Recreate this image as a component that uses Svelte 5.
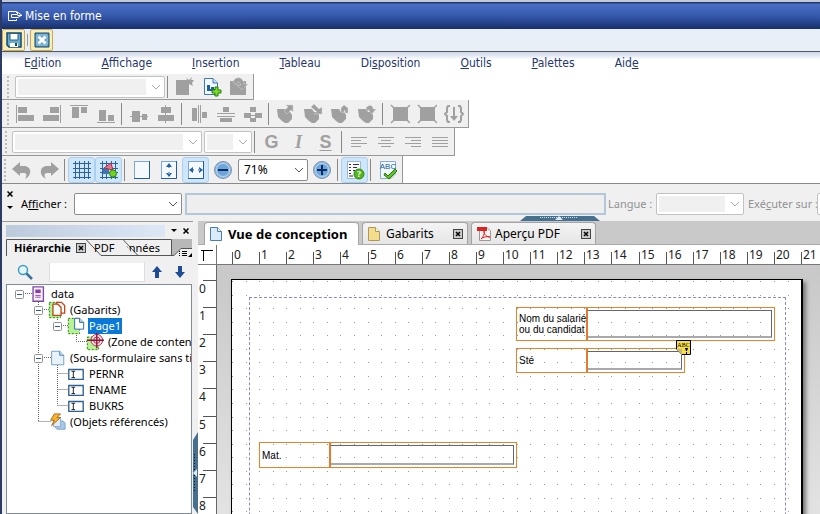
<script>
  const G = '#a0a0a0';
  const r = (x, y, w, h, f = G) => `<rect x="${x}" y="${y}" width="${w}" height="${h}" fill="${f}"/>`;
  const p = (d, f = G, s = 'none', w = 1) => `<path d="${d}" fill="${f}" stroke="${s}" stroke-width="${w}"/>`;
  const stack = p('M1 5H9L11 8H14L16 11V15L12 19H9L6 17L2 13Z');
  const gridLines = p('M1 3.5H19M1 8.5H19M1 12.5H19M1 17.5H19M3.5 1V19M7.5 1V19M12.5 1V19M16.5 1V19', 'none', '#2b62a0');
  const sheet = (x, w) => `<rect x="${x}.5" y="1.5" width="${w}" height="17" fill="#f3f9ff" stroke="#7fa6cf"/>` + p(`M${x + w}.5 1V18.5H${x}`, 'none', '#225c9c');
  const disc = '<circle cx="10" cy="10" r="8.5" fill="#8dbbe3" stroke="#8394aa"/><circle cx="10" cy="10" r="6.5" fill="#6fa6da" stroke="#b7d8f2"/>';
  const greenDot = '<circle cx="14" cy="14" r="5" fill="#55b51c" stroke="#2f8a10"/>';

  const icons = {
    newTable: r(1, 3, 13, 15) + p('M10 5L12 3L11 1L14 3L17 0L16 3L19 3L17 6L18 9L14 7L11 9Z', G),
    addData: p('M2.5 1.5H11L15.5 6V17.5H2.5Z', '#f3f9ff', '#3b78b4') + p('M11 1.5V6H15.5', '#cfe2f4', '#3b78b4') + r(5, 8, 3, 6, '#225f9f') + r(9, 10, 3, 4, '#225f9f') + r(5, 12, 8, 2, '#225f9f') + p('M13 10H16V13H19V16H16V19H13V16H10V13H13Z', '#75dd22', '#267d0c'),
    refresh: r(1, 4, 16, 14) + p('M4 5C6 -1 14 -1 15 7H19L13 13L8 8H12C11 4 8 4 7 8Z', G, '#d8d8d8', 0.5),
    alignLeft: r(1, 1, 1, 18) + r(3, 3, 9, 6) + r(3, 11, 16, 6),
    alignRight: r(18, 1, 1, 18) + r(8, 3, 9, 6) + r(1, 11, 16, 6),
    alignTop: r(1, 1, 18, 1) + r(3, 3, 7, 11) + r(12, 3, 6, 6),
    alignBottom: r(1, 18, 18, 1) + r(3, 6, 7, 11) + r(12, 11, 6, 6),
    middle: r(3, 7, 8, 11) + r(13, 10, 5, 6) + r(1, 12, 18, 1),
    center: r(5, 3, 10, 6) + r(2, 11, 16, 6) + r(9, 1, 1, 18),
    spreadH: r(3, 4, 5, 13) + r(9, 1, 1, 18) + r(11, 1, 1, 18) + r(13, 8, 5, 6),
    spreadV: r(7, 3, 6, 5) + r(1, 9, 18, 1) + r(1, 12, 18, 1) + r(4, 14, 12, 4),
    spread: r(7, 3, 6, 5) + r(1, 9, 7, 5) + r(12, 9, 7, 5) + r(7, 14, 6, 4) + r(8, 11, 4, 1),
    toFront: stack + p('M10 1H17V8L15 6L11 10L8 7L12 3Z', G, '#d8d8d8', 0.5),
    toBack: stack + p('M8 3L11 0L16 5L19 3V10H11L14 8Z', G, '#d8d8d8', 0.5),
    forward: stack + p('M11 8V4L14 1L18 4V9H15V6L13 9Z', G, '#d8d8d8', 0.5),
    backward: stack + p('M9 4C12 0 16 1 16 5H19L15 10L11 6H13L10 7Z', G, '#d8d8d8', 0.5),
    group: r(3, 3, 15, 14) + p('M1 1L4 4M20 1L17 4M1 19L4 16M20 19L17 16', 'none', G, 1.5),
    merge: p('M6 2H4L3 4V8L1 10L3 12V16L4 18H6M14 2H16L17 4V8L19 10L17 12V16L16 18H14', 'none', G, 2) + p('M9 3H11V12H14L10 17L6 12H9Z'),
    textLeft: r(2, 5, 16, 1) + r(2, 8, 10, 1) + r(2, 11, 16, 1) + r(2, 14, 10, 1),
    textCenter: r(2, 5, 16, 1) + r(5, 8, 10, 1) + r(2, 11, 16, 1) + r(5, 14, 10, 1),
    textRight: r(2, 5, 16, 1) + r(8, 8, 10, 1) + r(2, 11, 16, 1) + r(8, 14, 10, 1),
    justify: r(2, 5, 16, 1) + r(2, 8, 16, 1) + r(2, 11, 16, 1) + r(2, 14, 16, 1),
    undo: p('M0 9L8 2V6H13C20 7 20 16 13 19C15 16 15 13 12 13H8V16Z'),
    redo: p('M20 9L12 2V6H7C0 7 0 16 7 19C5 16 5 13 8 13H12V16Z'),
    grid: gridLines,
    snap: gridLines + r(4, 8, 6, 6, '#3e74b2') + p('M5 8L12 3L14 10Z', '#e4768a', '#b0304c') + '<circle cx="14" cy="13.5" r="3.5" fill="#74d020" stroke="#2f8a10"/>',
    page: sheet(2, 15),
    fitHeight: sheet(2, 15) + p('M10 3L13 7H7ZM10 17L13 13H7ZM9.5 6H10.5V8H9.5ZM9.5 12H10.5V14H9.5Z', '#1f62a4'),
    fitWidth: sheet(2, 15) + p('M3 10L7 7V13ZM17 10L13 7V13ZM6 9.5H8V10.5H6ZM12 9.5H14V10.5H12Z', '#1f62a4'),
    zoomOut: disc + r(5, 9, 10, 2, '#0d2c66'),
    zoomIn: disc + r(5, 9, 10, 2, '#0d2c66') + r(9, 5, 2, 10, '#0d2c66'),
    report: p('M2.5 1.5H15.5V18.5H2.5Z', '#fafcff', '#9eb6cf') + p('M4 4.5H6M8 4.5H14M4 7.5H6M8 7.5H12M4 10.5H6M8 10.5H10M4 13.5H6M4 16H8', 'none', '#333') + greenDot + '<text x="14" y="17" font-size="9" font-weight="bold" font-family="Liberation Serif" fill="#fff" text-anchor="middle">?</text>',
    spell: p('M2.5 1.5H17.5V14L13 18.5H2.5Z', '#f0f7ff', '#8aaed0') + '<text x="10" y="9" font-size="8" font-family="Liberation Sans" fill="#1c5a9a" text-anchor="middle">ABC</text>' + p('M7 13L10 16L17 9L19 11L11 19L6 15Z', '#62c41c', '#267d0c'),
    root: p('M4.5 2H16V18H4.5Z', '#fbf2ff', '#7a4aa0', 1.5) + r(7, 5, 6, 4, '#8a3cab') + r(7, 11, 6, 1, '#8a3cab') + r(7, 13, 6, 1, '#8a3cab'),
    masters: p('M1 1H14V19H1Z', '#aef08a') + '<path d="M1.5 1.5H14V18.5H1.5Z" fill="none" stroke="#247012" stroke-dasharray="2 2"/>' + p('M9.5 1.5H15L18.5 5V13.5H9.5Z', '#fff', '#c0481c', 1.5) + p('M5.5 3.5H11L14.5 7V16H5.5Z', '#fff', '#c0481c', 1.5),
    pageNode: p('M1 1H14V19H1Z', '#b8f296') + '<path d="M1.5 1.5H14V18.5H1.5Z" fill="none" stroke="#247012" stroke-dasharray="2 2"/>' + p('M8.5 1.5H14L18.5 6V13.5H8.5Z', '#fff', '#225f9f') + p('M14 1.5V6H18.5', '#bcd6ee', '#225f9f'),
    area: p('M1 4H14V19H1Z', '#b8f296') + '<path d="M1.5 4.5H14V18.5H1.5Z" fill="none" stroke="#247012" stroke-dasharray="2 2"/><circle cx="12" cy="8" r="6.5" fill="#fbdbe2" stroke="#a02848"/><circle cx="12" cy="8" r="3.5" fill="none" stroke="#a02848"/>' + p('M1 8H20M12 0V17', 'none', '#8a1434', 1.5),
    sub: p('M4 2.5H13L17.5 7V17.5H4Z', '#e8f2fa', '#6f97bb') + p('M13 2.5V7H17.5', '#c5dbee', '#4c7fae'),
    field: p('M2 5H18V16H2Z', '#fff', '#2f6092', 1.5) + p('M5 7H9M7 7V14M5 14H9', 'none', '#111'),
    refs: p('M8 9H17L19 11V18H10L8 16Z', '#a9c8e8', '#7b9fc4') + p('M6 6H14V15H6Z', '#e0edf8', '#8cabc9') + p('M7 1H14L10 5H14L4 14L7 8H3Z', '#fab42c', '#a4641c')
  };

  const bars = [
    { cls: 'b1', items: [{ combo: 150, off: true }, '|', 'newTable', 'addData', 'refresh'] },
    { cls: 'b2', items: ['alignLeft', 'alignRight', 'alignTop', 'alignBottom', '|', 'middle', 'center', '|', 'spreadH', 'spreadV', 'spread', '|', 'toFront', 'toBack', 'forward', 'backward', '|', 'group', 'group', 'merge'] },
    { cls: 'b3', items: [{ combo: 190, off: true }, { combo: 48, off: true }, '|', { t: 'G' }, { t: 'I' }, { t: 'S' }, '|', 'textLeft', 'textCenter', 'textRight', 'justify'] },
    { cls: 'b4', items: ['undo', 'redo', '|', 'grid', 'snap', '|', 'page', 'fitHeight', 'fitWidth', 'zoomOut', { combo: 70, val: '71%' }, 'zoomIn', '|', 'report', '|', 'spell'] }
  ];
  const active = ['grid', 'snap', 'fitWidth', 'report'];

  const menu = [['E', 'd', 'ition'], ['', 'A', 'ffichage'], ['', 'I', 'nsertion'], ['', 'T', 'ableau'], ['Di', 's', 'position'], ['', 'O', 'utils'], ['', 'P', 'alettes'], ['Aid', 'e', '']];

  const tree = [
    { d: 0, t: 'data', i: 'root', open: true },
    { d: 1, t: '(Gabarits)', i: 'masters', open: true },
    { d: 2, t: 'Page1', i: 'pageNode', open: true, sel: true },
    { d: 3, t: '(Zone de contenu)', i: 'area' },
    { d: 1, t: '(Sous-formulaire sans titre)', i: 'sub', open: true },
    { d: 2, t: 'PERNR', i: 'field' },
    { d: 2, t: 'ENAME', i: 'field' },
    { d: 2, t: 'BUKRS', i: 'field' },
    { d: 1, t: '(Objets référencés)', i: 'refs' }
  ];

  const CM = 27.1;
  const at = (n) => Math.round(n * CM);
  const hTicks = Array.from({ length: 22 }, (_, n) => n);
  const vTicks = Array.from({ length: 9 }, (_, n) => n);
  let dots = '';
  for (let j = 0; j < 59; j++) for (let i = 0; i < 42; i++) dots += `M${at(i / 2)} ${at(j / 2) + 1}h1v1h-1z`;

  let zoom = $state('71%');
</script>

{#snippet icon(name, size = 20)}
  <svg class="ic" viewBox="0 0 20 20" width={size} height={size} aria-hidden="true">{@html icons[name]}</svg>
{/snippet}

{#snippet chevron()}
  <svg class="chev" viewBox="0 0 10 6" width="10" height="6" aria-hidden="true"><path d="M1 1L5 5L9 1" fill="none" stroke="currentColor" /></svg>
{/snippet}

{#snippet cross()}
  <svg viewBox="0 0 10 10" width="10" height="10" aria-hidden="true"><rect x=".5" y=".5" width="9" height="9" fill="#ccc" stroke="#444" /><path d="M3 3L7 7M7 3L3 7" stroke="#000" stroke-width="1.5" /></svg>
{/snippet}

<div class="app">
  <header class="title">
    <svg viewBox="0 0 16 12" width="16" height="12" aria-hidden="true"><path d="M9.5 3V1.5H1.500V10.500H9.5V9M4.500 4.500H10.500V2L15 5.500H10.500M4.500 4.500V7.500H11L14 5.500" fill="none" stroke="#fff" /></svg>
    <h1>Mise en forme</h1>
  </header>

  <div class="actions">
    <button aria-label="Enregistrer"><svg viewBox="0 0 16 16" width="16" height="16"><path d="M1 1H15V15H3L1 13Z" fill="#6caacc" stroke="#104a74" stroke-width="1.5" /><path d="M4 1.500H12V8H4Z" fill="#fff" stroke="#2a6288" /><path d="M4 11H12V15H4Z" fill="#fff" /><path d="M9 11H11V14H9Z" fill="#104a74" /></svg></button>
    <i class="sep"></i>
    <button aria-label="Annuler"><svg viewBox="0 0 16 16" width="16" height="16"><path d="M1 1H15V15H1Z" fill="#5c9fc8" stroke="#104a74" /><path d="M3 3H13V13H3Z" fill="#5c9fc8" stroke="#9ccae4" /><path d="M4.500 4.500L11.500 11.500M11.500 4.500L4.500 11.500" stroke="#fff" stroke-width="3" /></svg></button>
  </div>

  <nav class="menu">
    {#each menu as m}<button>{m[0]}<u>{m[1]}</u>{m[2]}</button>{/each}
  </nav>

  <div class="bars">
    {#each bars as bar}
      <div class="bar {bar.cls}">
        <i class="grip"></i>
        {#each bar.items as it}
          {#if it === '|'}
            <i class="vsep"></i>
          {:else if it.combo}
            <span class="combo" class:off={it.off} style="width:{it.combo}px">
              {#if it.off}<select disabled aria-label="Style"><option></option></select>
              {:else}<select bind:value={zoom} aria-label="Zoom"><option>71%</option><option>100%</option></select>{/if}
              {@render chevron()}
            </span>
          {:else if it.t}
            <button class="tb glyph {it.t}">{it.t}</button>
          {:else}
            <button class="tb" class:on={active.includes(it)} aria-label={it}>{@render icon(it)}</button>
          {/if}
        {/each}
      </div>
    {/each}
  </div>

  <div class="show">
    <div class="mini">
      <svg viewBox="0 0 6 6" width="6" height="6"><path d="M.5 .5L5.5 5.5M5.5 .5L.5 5.5" stroke="#000" stroke-width="1.5" /></svg>
      <svg viewBox="0 0 6 3" width="6" height="3"><path d="M0 0H6L3 3Z" /></svg>
    </div>
    <label for="aff">A<u>f</u>ficher :</label>
    <span class="combo aff"><select id="aff"><option></option></select>{@render chevron()}</span>
    <input class="script" aria-label="Script" disabled />
    <label class="dim" for="lang">Langue :</label>
    <span class="combo off lang"><select id="lang" disabled><option></option></select>{@render chevron()}</span>
    <label class="dim" for="run">Exé<u>c</u>uter sur :</label>
    <span class="combo off run"><select id="run" disabled><option></option></select>{@render chevron()}</span>
    <svg class="hhandle" viewBox="0 0 80 5" width="80" height="5"><path d="M6 0H74L80 5H0Z" fill="#47708f" /><path d="M20 1.500H58" stroke="#c5dcec" stroke-dasharray="1 1" /><path d="M39 0L43 4H35Z" fill="#dceaf4" /></svg>
  </div>

  <main>
    <aside>
      <div class="palbar">
        <i></i>
        <svg viewBox="0 0 6 3" width="6" height="3"><path d="M0 0H6L3 3Z" /></svg>
        <svg viewBox="0 0 6 6" width="6" height="6"><path d="M.5 .5L5.5 5.5M5.5 .5L.5 5.5" stroke="#000" stroke-width="1.5" /></svg>
      </div>
      <div class="ptabs">
        <svg class="edges" viewBox="0 0 186 17" width="186" height="17" aria-hidden="true"><path d="M166 0H186V10H174L168 17H166Z" fill="#b8b8b8" /><path d="M.5 17V.5H165.5V16M80 .5L95 16.5H168L175 9.5H186M117 .5L132 16.5" fill="none" stroke="#555" /></svg>
        <button class="cur">Hiérarchie {@render cross()}</button>
        <button class="t2">PDF</button>
        <button class="t3">onnées</button>
        <svg class="opt" viewBox="0 0 13 8" width="13" height="8"><path d="M0 1.5H1M3 1.5H8M0 3.5H1M3 3.5H8M0 5.5H1M3 5.5H8" stroke="#000" /><path d="M13 3V7H9Z" /></svg>
      </div>
      <div class="search">
        <svg viewBox="0 0 16 16" width="16" height="16"><path d="M9 9L15 15" stroke="#3c7398" stroke-width="2.5" /><circle cx="6" cy="6" r="4.5" fill="#e4f6fc" stroke="#3f9cc0" stroke-width="1.5" /></svg>
        <input aria-label="Rechercher" />
        <button aria-label="Précédent"><svg viewBox="0 0 10 12" width="10" height="12"><path d="M5 0L10 6H7V12H3V6H0Z" fill="#1f4c94" /></svg></button>
        <button aria-label="Suivant"><svg viewBox="0 0 10 12" width="10" height="12"><path d="M5 12L10 6H7V0H3V6H0Z" fill="#1f4c94" /></svg></button>
      </div>
      <div class="tree">
        <svg class="lines" viewBox="0 0 120 150" width="120" height="150" aria-hidden="true"><path d="M18 8.5H26M31.5 17V136.5M31.5 136.5H44M37 24.5H44M50.5 32V35M56 40.5H62M69.5 48V56.5H80M37 72.5H44M50.5 80V120.5M50.5 88.5H61M50.5 104.5H61M50.5 120.5H61" fill="none" stroke="#666" stroke-dasharray="1 1" /></svg>
        <ul>
          {#each tree as n}
            <li style="padding-left:{8 + n.d * 19}px">
              {#if n.open}<svg class="exp" viewBox="0 0 9 9" width="9" height="9"><rect x=".5" y=".5" width="8" height="8" rx="1" fill="#fff" stroke="#8f8f8f" /><path d="M2 4.5H7" stroke="#3456a0" /></svg>{:else}<i class="exp"></i>{/if}
              {@render icon(n.i, 18)}
              <span class:sel={n.sel}>{n.t}</span>
            </li>
          {/each}
        </ul>
      </div>
    </aside>
    <div class="split"><svg viewBox="0 0 5 82" width="5" height="82"><path d="M5 0V82L0 75V8Z" fill="#47708f" /><path d="M1.5 22V60" stroke="#111" stroke-dasharray="1 2" /><path d="M0 41L4 37V45Z" fill="#dceaf4" /></svg></div>

    <section>
      <div class="tabs">
        <button class="cur"><svg viewBox="0 0 12 14" width="12" height="14"><path d="M.5 .5H7.5L11.5 4.5V13.5H.5Z" fill="#dcebfa" stroke="#4a7db0" /><path d="M7.5 .5V4.5H11.5" fill="#fff" stroke="#4a7db0" /></svg>Vue de conception</button>
        <button class="gab"><svg viewBox="0 0 12 14" width="12" height="14"><path d="M.5 .5H7.5L11.5 4.5V13.5H.5Z" fill="#f4dc8c" stroke="#b0985a" /><path d="M7.5 .5V4.5H11.5" fill="#fff" stroke="#b0985a" /></svg><span>Gabarits</span>{@render cross()}</button>
        <button class="pdf"><svg viewBox="0 0 14 14" width="14" height="14"><path d="M2.5 .5H10L13.5 4V13.5H2.5Z" fill="#f4f4f4" stroke="#999" /><path d="M0 0H10V4H0Z" fill="#d22" /><path d="M4 12C6 10 8 7 7 4C7 8 10 10 13 10C10 9 6 10 4 12Z" fill="none" stroke="#d22" /></svg><span>Aperçu PDF</span>{@render cross()}</button>
      </div>
      <div class="hruler">
        <svg class="corner" viewBox="0 0 19 20" width="19" height="20"><path d="M3 5.5H15M5.5 5V16" stroke="#000" /><path d="M18.5 0V20" stroke="#777" /></svg>
        <svg class="scale" width="603" height="20">
          {#each hTicks as n}
            <rect x={15 + at(n)} y="7" width="1" height="13" fill="#555" />
            <text x={17 + at(n)} y="14">{n}</text>
          {/each}
        </svg>
      </div>
      <div class="work">
        <svg class="vruler" width="19" height="820">
          {#each vTicks as n}
            <rect x="5" y={15 + at(n)} width="13" height="1" fill="#555" />
            <text x="1" y={28 + at(n)}>{n}</text>
          {/each}
        </svg>
        <div class="canvas">
          <div class="page">
            <svg class="dots" width="570" height="800" aria-hidden="true"><path d={dots} fill="#9494ac" /></svg>
            <div class="margin"></div>
            <div class="field f1"><label for="nom">Nom du salarié<br />ou du candidat</label><input id="nom" /></div>
            <div class="field f2"><label for="ste">Sté</label><input id="ste" /></div>
            <div class="field f3"><label for="mat">Mat.</label><input id="mat" /></div>
            <svg class="warn" viewBox="0 0 15 15" width="15" height="15"><path d="M.5 .5H14.5V14.5H6L.5 9Z" fill="#f4dc4c" stroke="#000" /><path d="M0 9H6V15Z" fill="#c9b878" /><text x="7.5" y="7" font-size="6" text-anchor="middle" font-family="Liberation Serif">ABC</text><path d="M9 8H12L11 11H10ZM10 12H11V14H10Z" /></svg>
          </div>
        </div>
      </div>
    </section>
  </main>
</div>

<style>
  :global(body) { overflow: hidden; }
  * { box-sizing: border-box; }
  .app { height: 100vh; display: flex; flex-direction: column; overflow: hidden; border-left: 2px solid #2c3b63; background: #f0f0f0; font: 11px/16px "Noto Sans", "Open Sans", sans-serif; color: #000; }
  button { border: 0; padding: 0; margin: 0; background: none; font: inherit; color: inherit; }
  svg { flex: none; display: block; }
  h1 { margin: 0; font: inherit; }
  .title { flex: none; height: 29px; display: flex; align-items: center; gap: 2px; padding: 0 0 0 5px; border-top: 2px solid #c2c9d2; background: linear-gradient(#1f3872 0, #1f3872 1px, #4a70c6 2px, #3558ac 14px, #17306b 100%); color: #fff; font: 12px/16px "DejaVu Sans Condensed", "DejaVu Sans", sans-serif; }
  .actions { flex: none; height: 23px; display: flex; align-items: flex-start; background: #e8eff6; border-bottom: 1px solid #505a60; }
  .actions button { width: 23px; height: 22px; display: grid; place-items: center; background: #fbeeb4; border: 1px solid #c6a860; border-radius: 2px; }
  .sep { width: 1px; height: 12px; margin: 5px 2px; background: #999; }
  .menu { flex: none; height: 22px; display: flex; align-items: center; gap: 40px; padding-left: 22px; background: linear-gradient(#ccd6e8, #fff 8px); color: #26376b; font: 12px/16px "DejaVu Sans Condensed", "DejaVu Sans", sans-serif; }
  .bars { flex: none; display: flex; flex-direction: column; align-items: flex-start; background: #fff; border-bottom: 1px solid #8a8a8a; }
  .bar { height: 28px; display: flex; align-items: center; background: #f0f0f0; border-right: 1px solid #999; border-bottom: 1px solid #999; padding-right: 1px; }
  .b1 { height: 26px; }
  .b4 { height: 27px; border-bottom: 0; }
  .grip { flex: none; width: 2px; height: 22px; margin: 0 1px 0 5px; background: repeating-linear-gradient(#bbb 0 2px, transparent 2px 4px); }
  .b1 .grip { margin-right: 6px; }
  .b2 .grip { margin-right: 2px; }
  .b3 .grip { margin-left: 3px; margin-right: 5px; }
  .b4 .grip { margin-left: 2px; margin-right: 2px; }
  .b3 .combo + .combo { margin-left: 2px; }
  .b4 .combo { margin: 0 0 0 2px; }
  .vsep { flex: none; width: 6px; height: 22px; background: linear-gradient(#888, #888) no-repeat 2px 0 / 1px 100%; }
  .tb { flex: none; width: 27px; height: 26px; display: grid; place-items: center; }
  .on { background: #cde6fa; border: 1px solid #a9d0f0; border-radius: 3px; }
  .glyph { color: #a0a0a0; font: bold 18px/24px "Liberation Sans", sans-serif; }
  .glyph.I { font-family: "Liberation Serif", serif; font-style: italic; }
  .glyph.S { text-decoration: underline; text-decoration-thickness: 1px; text-underline-offset: 2px; }
  .combo { position: relative; flex: none; display: block; height: 22px; color: #555; }
  .combo select { appearance: none; width: 100%; height: 100%; padding: 0 5px; border: 1px solid #8c8c8c; border-radius: 2px; background: #fff; font: 12px/18px "Noto Sans", sans-serif; color: #000; display: block; }
  .combo.off { color: #aaa; }
  .combo.off select { border-color: #c2c2c2; opacity: 1; background: linear-gradient(#f0f0f0, #f0f0f0) no-repeat 2px 2px / calc(100% - 20px) calc(100% - 4px), #fff; }
  .chev { position: absolute; right: 4px; top: 8px; pointer-events: none; }
  .show { position: relative; flex: none; height: 37px; display: flex; align-items: center; padding: 3px 0 0 5px; white-space: nowrap; overflow: hidden; }
  .mini { width: 14px; display: grid; gap: 9px; align-self: flex-start; padding-top: 4px; }
  .show label { width: 53px; font-size: 11px; }
  .show .dim { color: #909090; width: 46px; margin-left: 2px; }
  .aff { width: 108px; }
  .script { flex: 1 0 420px; height: 22px; margin: 0 0 0 3px; border: 2px solid #b3c7da; background: #eee; }
  .lang { width: 88px; margin-left: 2px; }
  .show .lang + .dim { width: 67px; margin: 0 2px 0 4px; }
  .run { width: 80px; margin-right: -77px; }
  .hhandle { position: absolute; left: 518px; bottom: 0; }
  main { flex: 1; min-height: 0; display: flex; }
  aside { flex: none; width: 191px; display: flex; flex-direction: column; padding-left: 4px; border-top: 1px solid #999; overflow: hidden; }
  .palbar { height: 17px; display: flex; align-items: center; gap: 6px; }
  .palbar i { width: 159px; height: 12px; background: linear-gradient(90deg, #bccbdc, #dce8f6); }
  .ptabs { position: relative; height: 18px; display: flex; align-items: center; width: 186px; }
  .ptabs button { position: relative; display: flex; align-items: center; line-height: 16px; }
  .ptabs .cur { font-weight: bold; gap: 5px; margin-left: 8px; width: 80px; white-space: nowrap; }
  .ptabs .t2 { width: 28px; }
  .ptabs .t3 { width: 46px; clip-path: polygon(0 0, 12px 16px, 100% 100%, 100% 0); }
  .edges { position: absolute; left: 0; top: 0; }
  .opt { position: absolute; right: 0; bottom: -1px; }
  .search { height: 27px; display: flex; align-items: center; padding: 2px 7px 0 11px; }
  .search input { width: 96px; height: 20px; margin: 0 7px 0 16px; border: 1px solid #ddd; border-top-color: #eee; background: #fff; }
  .search button { margin-right: 13px; }
  .tree { position: relative; flex: 1; width: 186px; overflow: hidden; background: #fff; border: 1px solid #7e8c9c; }
  .lines { position: absolute; left: 0; top: 0; }
  ul { position: relative; list-style: none; margin: 0; padding: 1px 0 0; }
  li { display: flex; align-items: center; height: 16px; white-space: nowrap; }
  .exp { flex: none; width: 9px; margin-right: 5px; }
  li span { margin-left: 3px; padding: 0 1px; }
  .sel { background: #0a78d6; color: #fff; }
  .split { flex: none; width: 5px; position: relative; background: #f0f0f0; }
  .split svg { position: absolute; left: 0; bottom: 0; }
  section { flex: 1; min-width: 0; display: flex; flex-direction: column; background: #c9c9c9; }
  .tabs { flex: none; height: 24px; display: flex; align-items: flex-end; gap: 3px; padding-left: 6px; border-bottom: 1px solid #aaa; font-size: 12px; }
  .tabs button { height: 22px; display: flex; align-items: center; padding: 0 4px 0 5px; background: linear-gradient(#f4f4f4, #e6e6e6); border: 1px solid #a4a4a4; border-bottom: 0; border-radius: 4px 4px 0 0; white-space: nowrap; }
  .tabs .cur { width: 155px; height: 23px; margin-bottom: -1px; gap: 6px; background: #fff; font-weight: bold; font-size: 13px; }
  .tabs .gab { width: 106px; }
  .tabs .pdf { width: 125px; }
  .tabs span { flex: 1; text-align: left; margin-left: 6px; }
  .tabs .pdf span { margin-left: 4px; }
  .hruler { flex: none; display: flex; height: 20px; background: #fff; border-bottom: 1px solid #777; overflow: hidden; }
  .hruler text, .vruler text { font: 12px "Noto Sans", sans-serif; fill: #222; }
  .work { flex: 1; min-height: 0; display: flex; overflow: hidden; }
  .vruler { background: #fff; border-right: 1px solid #666; }
  .canvas { flex: 1; min-width: 0; padding: 14px; background: linear-gradient(#c8c8c8, #e2e2e2 240px); }
  .page { position: relative; width: 572px; height: 810px; background: #fff; border: 1px solid #000; border-right-width: 2px; box-shadow: 3px 3px 4px #777; }
  .dots { position: absolute; left: 0; top: 0; }
  .margin { position: absolute; left: 17px; top: 17px; width: 537px; height: 770px; border: 1px dashed #8c86cc; }
  .field { position: absolute; display: flex; align-items: stretch; border: 1px solid #d88838; box-shadow: 0 0 1px #ffe0a0; padding: 2px; }
  .field label { display: flex; align-items: center; font: 10px/11px "Liberation Sans", sans-serif; white-space: nowrap; border-right: 2px solid #e47a2c; margin: -2px 0; }
  .field input { flex: 1; min-width: 0; border: 1px solid #666; border-left: 0; border-bottom: 2px solid #aaa; background: transparent; padding: 0; }
  .f1 { left: 284px; top: 27px; width: 259px; height: 34px; }
  .f2 { left: 284px; top: 68px; width: 169px; height: 25px; }
  .f1 label, .f2 label { width: 69px; }
  .f3 { left: 27px; top: 162px; width: 258px; height: 26px; }
  .f3 label { width: 69px; }
  .warn { position: absolute; left: 444px; top: 60px; }
</style>
